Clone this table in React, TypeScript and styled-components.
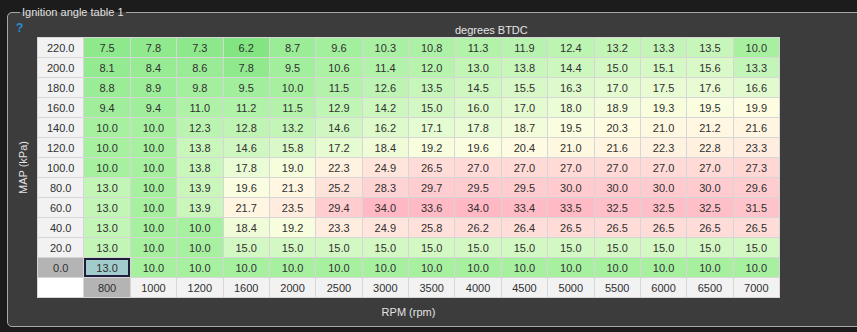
import React from "react";
import styled, { createGlobalStyle } from "styled-components";

const GlobalStyle = createGlobalStyle`
  html, body {
    margin: 0;
    background: #1c1c1c;
    overflow: hidden;
    font-family: "Liberation Sans", Arial, sans-serif;
  }
`;

const Page = styled.div`
  box-sizing: border-box;
  width: 857px;
  height: 332px;
  padding: 6px 0 0 7px;
`;

// left padding only positions the legend; Body pulls itself back
const GroupBox = styled.fieldset`
  margin: 0;
  padding: 0 0 0 12px;
  width: 1000px;
  border: 1px solid #a8a8a8;
  border-radius: 5px;
  background: #3c3c3c;
`;

const Legend = styled.legend`
  padding: 0 2px;
  font-size: 11px;
  line-height: 12px;
  color: #e2e2e2;
`;

const Body = styled.div`
  display: flex;
  margin-left: -12px;
`;

const Side = styled.div`
  width: 29px;
  display: flex;
  flex-direction: column;
`;

const Help = styled.div`
  height: 19px;
  line-height: 21px;
  padding-left: 8px;
  font-size: 12px;
  font-weight: bold;
  color: #2290d2;
`;

const VerticalLabel = styled.div`
  height: 262px;
  display: flex;
  align-items: center;
  justify-content: center;
  writing-mode: vertical-rl;
  transform: rotate(180deg);
  font-size: 11px;
  color: #e2e2e2;
`;

const Main = styled.div`
  display: flex;
  flex-direction: column;
`;

const Header = styled.div`
  height: 19px;
  box-sizing: border-box;
  padding: 6px 0 0 418px;
  font-size: 11px;
  line-height: 13px;
  color: #e6e6e6;
`;

const Grid = styled.table`
  width: 743px;
  table-layout: fixed;
  border-collapse: collapse;
  border: 1px solid #6e6e6e;
`;

const Row = styled.tr`
  height: 20px;
`;

const Cell = styled.td<{ $bg: string; $selected?: boolean }>`
  padding: 0;
  height: 20px;
  box-sizing: border-box;
  border: 1px solid #d6d6d6;
  background: ${(p) => p.$bg};
  box-shadow: ${(p) => (p.$selected ? "inset 0 0 0 2px #1e1e3c" : "none")};
  text-align: center;
  font-size: 11px;
  color: #303030;
`;

const AxisLabel = styled.div`
  height: 28px;
  width: 743px;
  display: flex;
  align-items: center;
  justify-content: center;
  font-size: 11px;
  color: #e2e2e2;
`;

const mapAxis = [220, 200, 180, 160, 140, 120, 100, 80, 60, 40, 20, 0];
const rpmAxis = [800, 1000, 1200, 1600, 2000, 2500, 3000, 3500, 4000, 4500, 5000, 5500, 6000, 6500, 7000];

const values: number[][] = [
  [7.5, 7.8, 7.3, 6.2, 8.7, 9.6, 10.3, 10.8, 11.3, 11.9, 12.4, 13.2, 13.3, 13.5, 10.0],
  [8.1, 8.4, 8.6, 7.8, 9.5, 10.6, 11.4, 12.0, 13.0, 13.8, 14.4, 15.0, 15.1, 15.6, 13.3],
  [8.8, 8.9, 9.8, 9.5, 10.0, 11.5, 12.6, 13.5, 14.5, 15.5, 16.3, 17.0, 17.5, 17.6, 16.6],
  [9.4, 9.4, 11.0, 11.2, 11.5, 12.9, 14.2, 15.0, 16.0, 17.0, 18.0, 18.9, 19.3, 19.5, 19.9],
  [10.0, 10.0, 12.3, 12.8, 13.2, 14.6, 16.2, 17.1, 17.8, 18.7, 19.5, 20.3, 21.0, 21.2, 21.6],
  [10.0, 10.0, 13.8, 14.6, 15.8, 17.2, 18.4, 19.2, 19.6, 20.4, 21.0, 21.6, 22.3, 22.8, 23.3],
  [10.0, 10.0, 13.8, 17.8, 19.0, 22.3, 24.9, 26.5, 27.0, 27.0, 27.0, 27.0, 27.0, 27.0, 27.3],
  [13.0, 10.0, 13.9, 19.6, 21.3, 25.2, 28.3, 29.7, 29.5, 29.5, 30.0, 30.0, 30.0, 30.0, 29.6],
  [13.0, 10.0, 13.9, 21.7, 23.5, 29.4, 34.0, 33.6, 34.0, 33.4, 33.5, 32.5, 32.5, 32.5, 31.5],
  [13.0, 10.0, 10.0, 18.4, 19.2, 23.3, 24.9, 25.8, 26.2, 26.4, 26.5, 26.5, 26.5, 26.5, 26.5],
  [13.0, 10.0, 10.0, 15.0, 15.0, 15.0, 15.0, 15.0, 15.0, 15.0, 15.0, 15.0, 15.0, 15.0, 15.0],
  [13.0, 10.0, 10.0, 10.0, 10.0, 10.0, 10.0, 10.0, 10.0, 10.0, 10.0, 10.0, 10.0, 10.0, 10.0],
];

// heat map stops: green (low advance) -> pale yellow -> pink (high advance)
const stops: [number, number[]][] = [
  [6, [128, 228, 128]],
  [10, [166, 240, 160]],
  [15, [212, 248, 196]],
  [18, [236, 252, 214]],
  [20, [255, 253, 226]],
  [24, [255, 234, 222]],
  [28, [255, 212, 212]],
  [34, [255, 184, 196]],
];

const heat = (v: number) => {
  if (v <= stops[0][0]) return `rgb(${stops[0][1].join(",")})`;
  for (let i = 1; i < stops.length; i++) {
    const [hi, c1] = stops[i];
    const [lo, c0] = stops[i - 1];
    if (v <= hi) {
      const t = (v - lo) / (hi - lo);
      const c = c0.map((x, k) => Math.round(x + (c1[k] - x) * t));
      return `rgb(${c.join(",")})`;
    }
  }
  return `rgb(${stops[stops.length - 1][1].join(",")})`;
};

const SEL_ROW = 11;
const SEL_COL = 0;

export default function App() {
  return (
    <>
      <GlobalStyle />
      <Page>
        <GroupBox>
          <Legend>Ignition angle table 1</Legend>
          <Body>
            <Side>
              <Help>?</Help>
              <VerticalLabel>MAP (kPa)</VerticalLabel>
            </Side>
            <Main>
              <Header>degrees BTDC</Header>
              <Grid>
                <tbody>
                  {values.map((row, r) => (
                    <Row key={r}>
                      <Cell $bg={r === SEL_ROW ? "#b4b4b4" : "#f2f2f2"}>
                        {mapAxis[r].toFixed(1)}
                      </Cell>
                      {row.map((v, c) => {
                        const selected = r === SEL_ROW && c === SEL_COL;
                        return (
                          <Cell key={c} $bg={selected ? "#a2cccc" : heat(v)} $selected={selected}>
                            {v.toFixed(1)}
                          </Cell>
                        );
                      })}
                    </Row>
                  ))}
                  <Row>
                    <Cell $bg="#ffffff" />
                    {rpmAxis.map((rpm, c) => (
                      <Cell key={rpm} $bg={c === SEL_COL ? "#b4b4b4" : "#f2f2f2"}>
                        {rpm}
                      </Cell>
                    ))}
                  </Row>
                </tbody>
              </Grid>
              <AxisLabel>RPM (rpm)</AxisLabel>
            </Main>
          </Body>
        </GroupBox>
      </Page>
    </>
  );
}
